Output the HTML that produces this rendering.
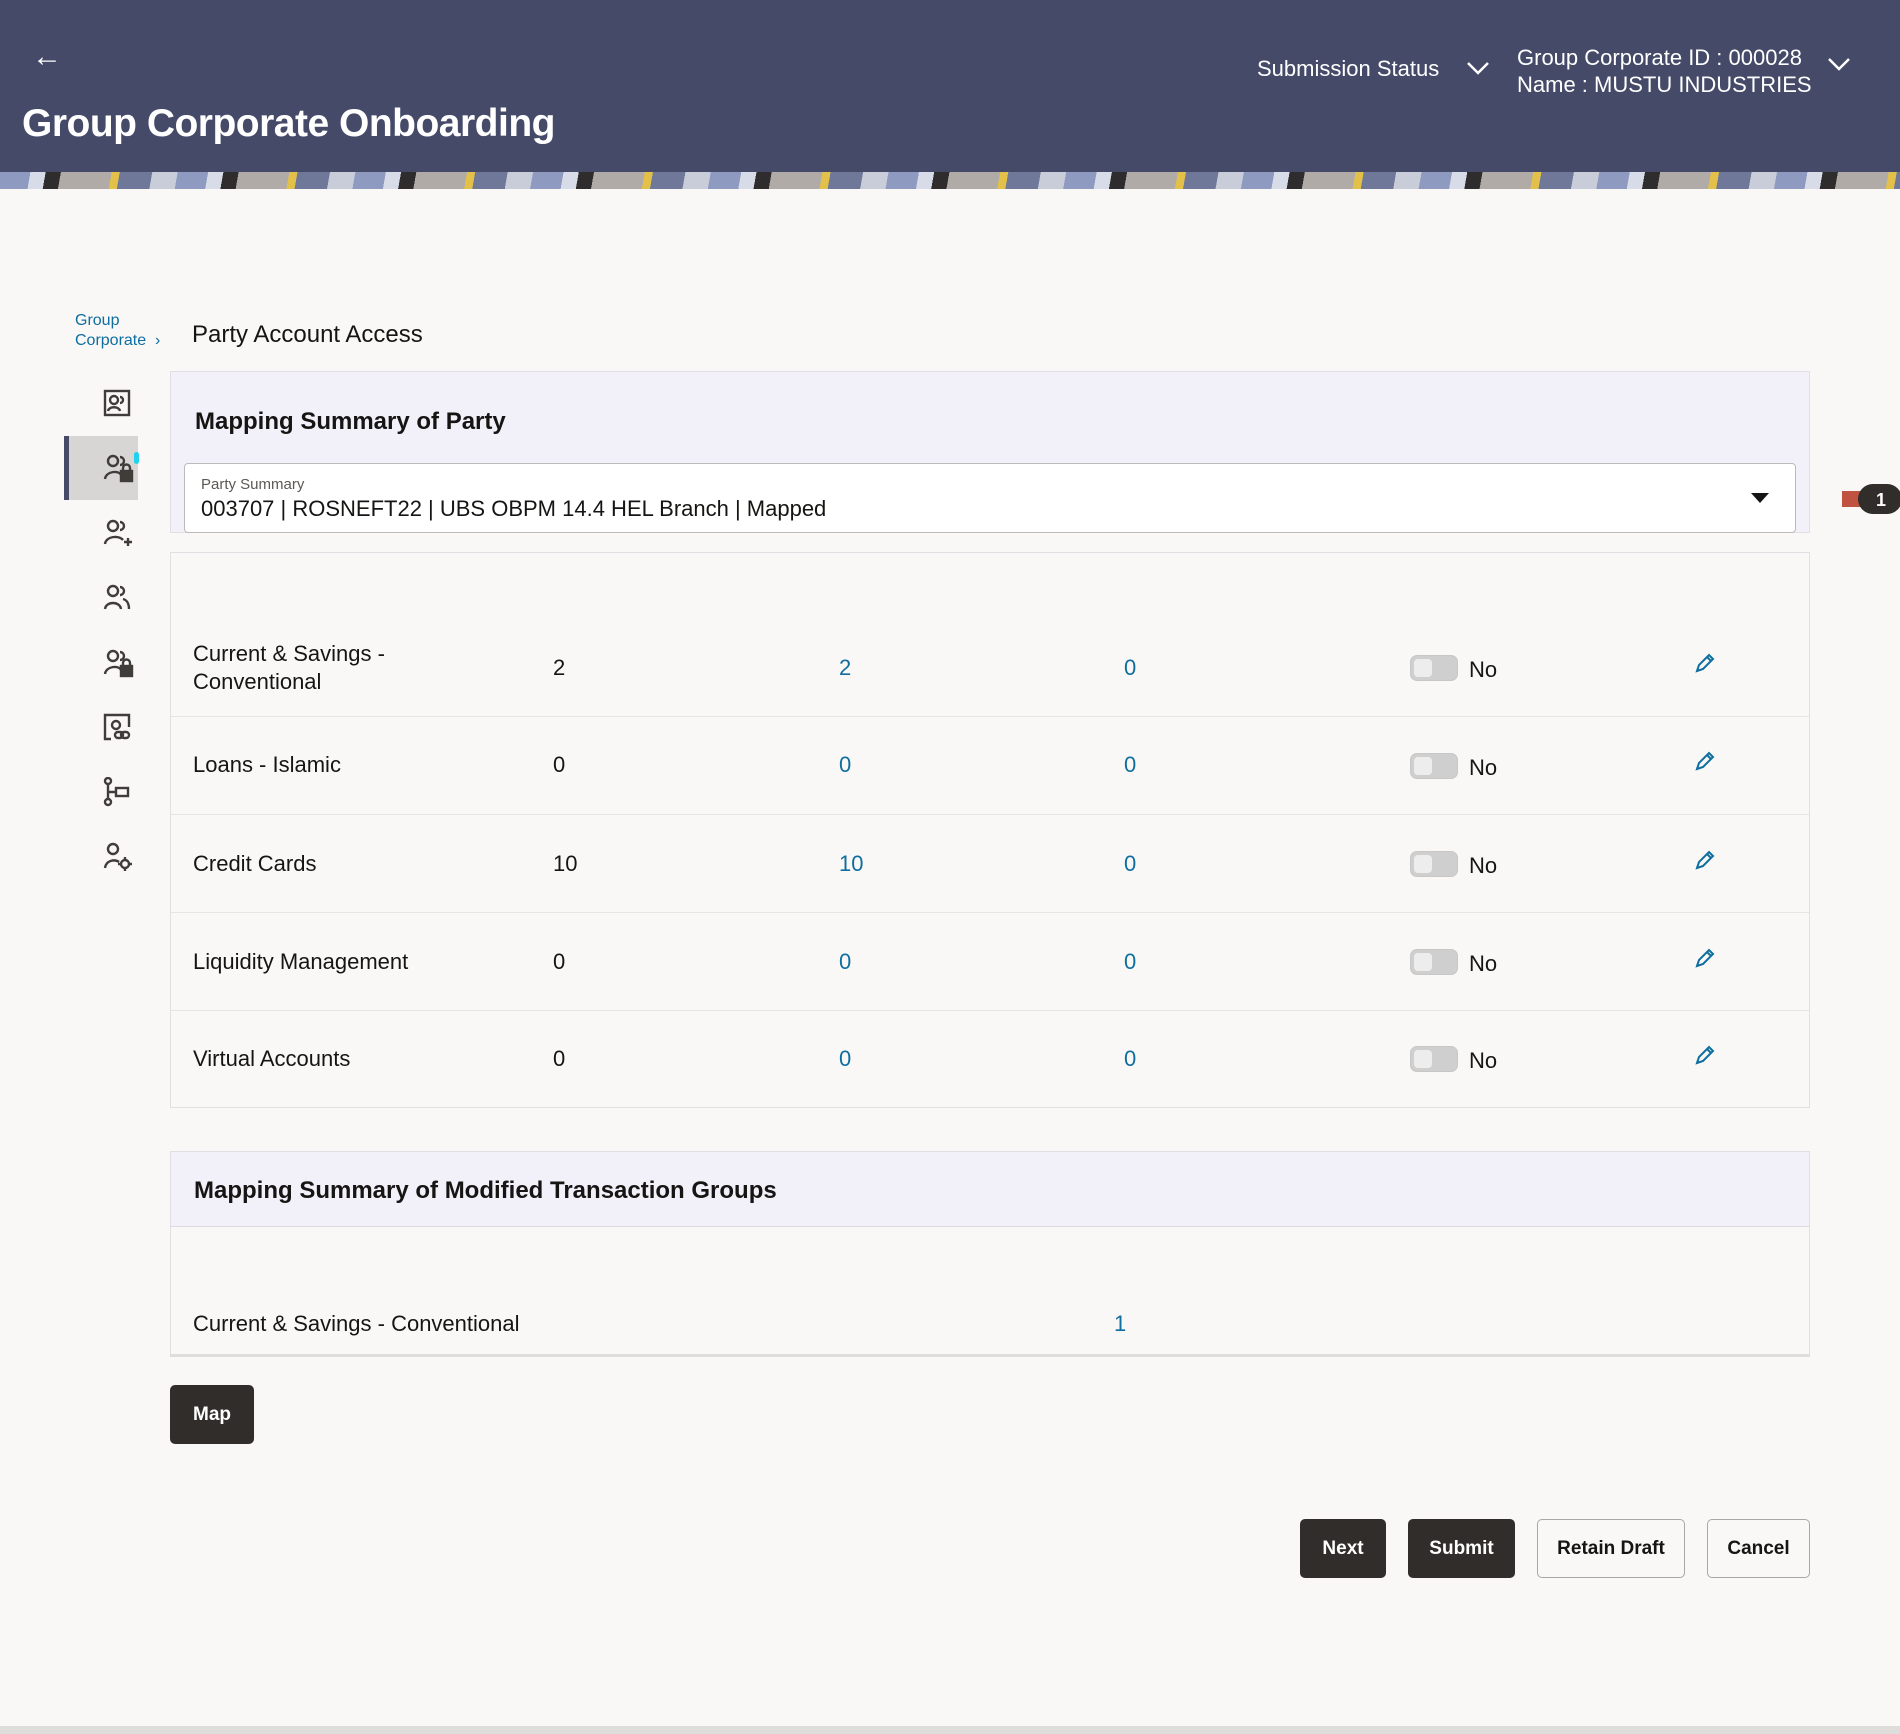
<!DOCTYPE html>
<html><head><meta charset="utf-8"><style>
*{box-sizing:border-box;margin:0;padding:0}
body{width:1900px;height:1734px;background:#f9f8f6;font-family:"Liberation Sans",sans-serif;color:#161513;position:relative;overflow:hidden}
.abs{position:absolute}
.hdr{left:0;top:0;width:1900px;height:172px;background:#454a68}
.stripe{left:0;top:172px;width:1900px;height:17px;background:repeating-linear-gradient(100deg,#8f9ac0 0 30px,#d8dbe8 30px 45px,#2e2c2c 45px 60px,#b0aba6 60px 110px,#e2c04a 110px 118px,#6f7898 118px 150px,#c9cdd9 150px 175px)}
.w{color:#fff}
.t{font-size:22px;white-space:nowrap}
.panel{background:#f9f8f6;border:1px solid #e0dfe3}
.lav{background:#f2f0f9}
.blue{color:#0f6ea0}
.tog{width:48px;height:26px;border-radius:7px;background:#d0cfcf;border:1px solid #c8c7c6}
.tog::after{content:"";position:absolute;left:3px;top:3px;width:18px;height:18px;border-radius:4px;background:#eeeded}
.sep{left:171px;width:1638px;height:1px;background:#e6e5e3}
.btn{height:59px;border-radius:5px;font-size:19px;font-weight:bold;display:flex;align-items:center;justify-content:center}
.dk{background:#312d2a;color:#fff}
.ol{border:1px solid #a9a7a5;color:#161513;background:#f9f8f6}
svg.i{position:absolute;fill:none;stroke:#403c39;stroke-width:2.4}
</style></head><body>
<div class="abs hdr"></div>
<div class="abs stripe"></div>
<div class="abs w" style="left:32px;top:40px;font-size:30px">&#8592;</div>
<div class="abs w" style="left:22px;top:102px;font-size:39px;font-weight:bold;letter-spacing:-0.5px">Group Corporate Onboarding</div>
<div class="abs w t" style="left:1257px;top:56px">Submission Status</div>
<svg class="abs" style="left:1465px;top:60px" width="26" height="16"><path d="M3 3l10 10 10-10" stroke="#fff" stroke-width="2.5" fill="none"/></svg>
<div class="abs w t" style="left:1517px;top:45px">Group Corporate ID : 000028</div>
<div class="abs w t" style="left:1517px;top:72px">Name : MUSTU INDUSTRIES</div>
<svg class="abs" style="left:1826px;top:56px" width="26" height="16"><path d="M3 3l10 10 10-10" stroke="#fff" stroke-width="2.5" fill="none"/></svg>

<div class="abs blue" style="left:75px;top:311px;font-size:16px;line-height:20px">Group<br>Corporate &nbsp;&#8250;</div>
<div class="abs" style="left:192px;top:321px;font-size:24px">Party Account Access</div>

<div class="abs" style="left:64px;top:436px;width:74px;height:64px;background:#d7d6d4;border-left:5px solid #454a68"></div>
<div class="abs" style="left:134px;top:452px;width:5px;height:12px;background:#1fd3ef;border-radius:3px"></div>
<svg class="i" style="left:103px;top:389px" width="28" height="28"><rect x="2" y="2" width="24" height="24"/><circle cx="11" cy="11" r="4"/><path d="M5 22c1-5 11-5 12 0M17 8a3 3 0 0 1 0 6"/></svg>
<svg class="i" style="left:103px;top:453px" width="32" height="32"><circle cx="10" cy="8" r="5"/><path d="M2 26c1-8 14-9 16-4M17 4a4 4 0 0 1 0 8"/><rect x="18" y="18" width="11" height="10" fill="#403c39"/><path d="M20 18v-3a3.5 3.5 0 0 1 7 0v3"/></svg>
<svg class="i" style="left:103px;top:518px" width="32" height="32"><circle cx="10" cy="8" r="5"/><path d="M2 26c1-8 14-9 18-4M17 4a4 4 0 0 1 0 8M21 24h8M25 20v8"/></svg>
<svg class="i" style="left:103px;top:583px" width="32" height="32"><circle cx="10" cy="8" r="5"/><path d="M2 26c1-8 15-8 16 0M17 4a4 4 0 0 1 0 8M20 16c4 1 6 5 6 10"/></svg>
<svg class="i" style="left:103px;top:648px" width="32" height="32"><circle cx="10" cy="8" r="5"/><path d="M2 26c1-8 14-9 16-4M17 4a4 4 0 0 1 0 8"/><rect x="18" y="18" width="11" height="10" fill="#403c39"/><path d="M20 18v-3a3.5 3.5 0 0 1 7 0v3"/></svg>
<svg class="i" style="left:103px;top:713px" width="30" height="30"><path d="M8 26H2V2h24v12"/><circle cx="13" cy="12" r="4"/><rect x="12" y="19" width="8" height="6" rx="3"/><rect x="18" y="19" width="8" height="6" rx="3"/></svg>
<svg class="i" style="left:103px;top:777px" width="30" height="30"><circle cx="5" cy="4" r="3"/><circle cx="5" cy="25" r="3"/><path d="M5 7v15M5 15h8"/><rect x="13" y="11" width="12" height="8"/></svg>
<svg class="i" style="left:103px;top:842px" width="30" height="30"><circle cx="10" cy="7" r="5"/><path d="M2 26c1-8 10-9 14-6"/><circle cx="22" cy="22" r="4"/><path d="M22 15v3M22 26v3M15 22h3M26 22h3"/></svg>

<div class="abs lav" style="left:170px;top:371px;width:1640px;height:162px;border:1px solid #e0dfe3"></div>
<div class="abs" style="left:195px;top:408px;font-size:24px;font-weight:bold;color:#161513">Mapping Summary of Party</div>
<div class="abs" style="left:184px;top:463px;width:1612px;height:70px;background:#fff;border:1px solid #bdbbb9;border-radius:4px"></div>
<div class="abs" style="left:201px;top:476px;font-size:15px;color:#5c5955">Party Summary</div>
<div class="abs" style="left:201px;top:496px;font-size:22px">003707 | ROSNEFT22 | UBS OBPM 14.4 HEL Branch | Mapped</div>
<svg class="abs" style="left:1751px;top:493px" width="18" height="10"><path d="M0 0h18L9 10z" fill="#161513"/></svg>
<div class="abs" style="left:1842px;top:491px;width:40px;height:16px;background:#c0533f"></div>
<div class="abs" style="left:1858px;top:484px;width:44px;height:30px;border-radius:15px;background:#312d2a;color:#fff;font-weight:bold;font-size:18px;padding:6px 0 0 18px">1</div>

<div class="abs panel" style="left:170px;top:552px;width:1640px;height:556px"></div>
<div class="abs sep" style="top:716px"></div>
<div class="abs sep" style="top:814px"></div>
<div class="abs sep" style="top:912px"></div>
<div class="abs sep" style="top:1010px"></div>

<div class="abs t" style="left:193px;top:640px;line-height:28px">Current &amp; Savings -<br>Conventional</div>
<div class="abs t" style="left:193px;top:752px">Loans - Islamic</div>
<div class="abs t" style="left:193px;top:851px">Credit Cards</div>
<div class="abs t" style="left:193px;top:949px">Liquidity Management</div>
<div class="abs t" style="left:193px;top:1046px">Virtual Accounts</div>

<div class="abs t" style="left:553px;top:655px">2</div>
<div class="abs t" style="left:553px;top:752px">0</div>
<div class="abs t" style="left:553px;top:851px">10</div>
<div class="abs t" style="left:553px;top:949px">0</div>
<div class="abs t" style="left:553px;top:1046px">0</div>

<div class="abs t blue" style="left:839px;top:655px">2</div>
<div class="abs t blue" style="left:839px;top:752px">0</div>
<div class="abs t blue" style="left:839px;top:851px">10</div>
<div class="abs t blue" style="left:839px;top:949px">0</div>
<div class="abs t blue" style="left:839px;top:1046px">0</div>

<div class="abs t blue" style="left:1124px;top:655px">0</div>
<div class="abs t blue" style="left:1124px;top:752px">0</div>
<div class="abs t blue" style="left:1124px;top:851px">0</div>
<div class="abs t blue" style="left:1124px;top:949px">0</div>
<div class="abs t blue" style="left:1124px;top:1046px">0</div>

<div class="abs tog" style="left:1410px;top:655px"></div><div class="abs t" style="left:1469px;top:657px">No</div>
<div class="abs tog" style="left:1410px;top:753px"></div><div class="abs t" style="left:1469px;top:755px">No</div>
<div class="abs tog" style="left:1410px;top:851px"></div><div class="abs t" style="left:1469px;top:853px">No</div>
<div class="abs tog" style="left:1410px;top:949px"></div><div class="abs t" style="left:1469px;top:951px">No</div>
<div class="abs tog" style="left:1410px;top:1046px"></div><div class="abs t" style="left:1469px;top:1048px">No</div>

<svg class="abs" style="left:1694px;top:652px" width="22" height="22"><path d="M3 19l2-6L15 3l4 4L9 17z M13 5l4 4" stroke="#0f6ea0" stroke-width="2" fill="none"/></svg>
<svg class="abs" style="left:1694px;top:750px" width="22" height="22"><path d="M3 19l2-6L15 3l4 4L9 17z M13 5l4 4" stroke="#0f6ea0" stroke-width="2" fill="none"/></svg>
<svg class="abs" style="left:1694px;top:849px" width="22" height="22"><path d="M3 19l2-6L15 3l4 4L9 17z M13 5l4 4" stroke="#0f6ea0" stroke-width="2" fill="none"/></svg>
<svg class="abs" style="left:1694px;top:947px" width="22" height="22"><path d="M3 19l2-6L15 3l4 4L9 17z M13 5l4 4" stroke="#0f6ea0" stroke-width="2" fill="none"/></svg>
<svg class="abs" style="left:1694px;top:1044px" width="22" height="22"><path d="M3 19l2-6L15 3l4 4L9 17z M13 5l4 4" stroke="#0f6ea0" stroke-width="2" fill="none"/></svg>

<div class="abs panel" style="left:170px;top:1151px;width:1640px;height:206px;border-bottom:3px solid #dedddb"></div>
<div class="abs lav" style="left:171px;top:1152px;width:1638px;height:75px;border-bottom:1px solid #dcdae3"></div>
<div class="abs" style="left:194px;top:1177px;font-size:24px;font-weight:bold">Mapping Summary of Modified Transaction Groups</div>
<div class="abs t" style="left:193px;top:1311px">Current &amp; Savings - Conventional</div>
<div class="abs t blue" style="left:1114px;top:1311px">1</div>

<div class="abs btn dk" style="left:170px;top:1385px;width:84px">Map</div>
<div class="abs btn dk" style="left:1300px;top:1519px;width:86px">Next</div>
<div class="abs btn dk" style="left:1408px;top:1519px;width:107px">Submit</div>
<div class="abs btn ol" style="left:1537px;top:1519px;width:148px">Retain Draft</div>
<div class="abs btn ol" style="left:1707px;top:1519px;width:103px">Cancel</div>
<div class="abs" style="left:0;top:1726px;width:1900px;height:8px;background:#dedddb"></div>
</body></html>
